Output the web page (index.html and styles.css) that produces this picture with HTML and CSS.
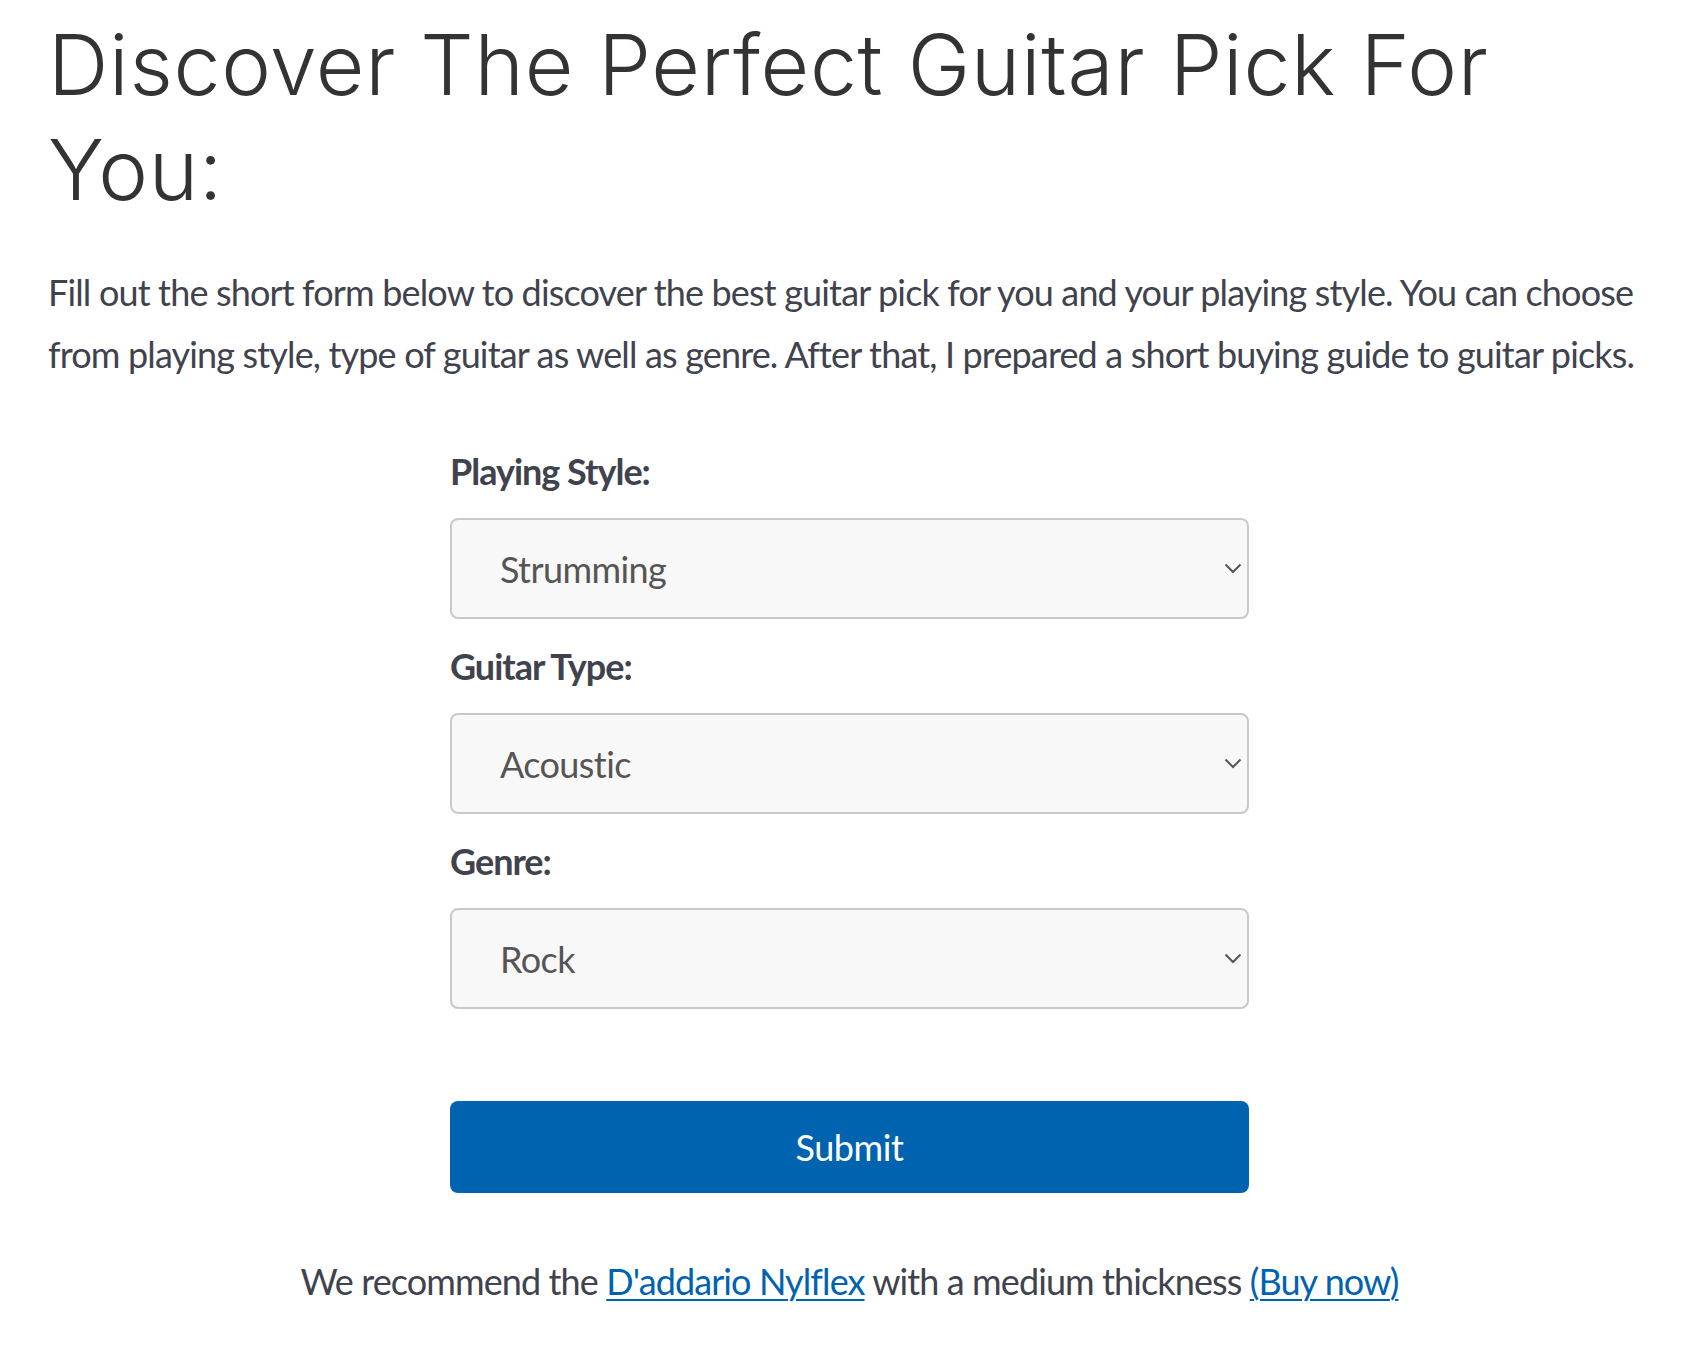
FILE: index.html
```html
<!DOCTYPE html>
<html lang="en">
<head>
<meta charset="utf-8">
<title>Discover The Perfect Guitar Pick For You</title>
<link rel="stylesheet" href="styles.css">
</head>
<body>
<main class="page">
  <h1 class="title">Discover The Perfect Guitar Pick For You:</h1>
  <p class="intro">Fill out the short form below to discover the best guitar pick for you and your playing style. You can choose from playing style, type of guitar as well as genre. After that, I prepared a short buying guide to guitar picks.</p>

  <form class="picker">
    <div class="field">
      <label class="field-label" for="style">Playing Style:</label>
      <div class="select-wrap">
        <select id="style" class="select">
          <option>Strumming</option>
          <option>Picking</option>
          <option>Both</option>
        </select>
        <svg class="chevron" viewBox="0 0 18 11" aria-hidden="true"><path d="M1.5 1.5 L9 9 L16.5 1.5" /></svg>
      </div>
    </div>
    <div class="field">
      <label class="field-label" for="type">Guitar Type:</label>
      <div class="select-wrap">
        <select id="type" class="select">
          <option>Acoustic</option>
          <option>Electric</option>
          <option>Bass</option>
        </select>
        <svg class="chevron" viewBox="0 0 18 11" aria-hidden="true"><path d="M1.5 1.5 L9 9 L16.5 1.5" /></svg>
      </div>
    </div>
    <div class="field">
      <label class="field-label" for="genre">Genre:</label>
      <div class="select-wrap">
        <select id="genre" class="select">
          <option>Rock</option>
          <option>Metal</option>
          <option>Jazz</option>
        </select>
        <svg class="chevron" viewBox="0 0 18 11" aria-hidden="true"><path d="M1.5 1.5 L9 9 L16.5 1.5" /></svg>
      </div>
    </div>
    <button type="button" class="submit">Submit</button>
  </form>

  <p class="result">We recommend the <a href="#">D'addario Nylflex</a> with a medium thickness <a href="#">(Buy now)</a></p>
</main>
</body>
</html>
```

FILE: styles.css
```css
html, body {
  margin: 0;
  padding: 0;
  background: #ffffff;
}

body {
  font-family: "Lato", "Liberation Sans", sans-serif;
  color: #40434d;
}

.page {
  padding: 12px 37px 40px 48px;
}

.title {
  margin: 0;
  font-family: "Inter", "Lato", sans-serif;
  font-weight: 300;
  font-size: 84px;
  line-height: 105px;
  color: #333333;
  letter-spacing: 0.7px;
}

.intro {
  margin: 39px 0 0 0;
  font-size: 36px;
  line-height: 62px;
  letter-spacing: -0.85px;
}

.picker {
  width: 799px;
  margin: 56px auto 0 auto;
  display: flex;
  flex-direction: column;
}

.field {
  display: flex;
  flex-direction: column;
  gap: 16px;
  margin-bottom: 17px;
}

.field-label {
  font-size: 36px;
  line-height: 61px;
  font-weight: 700;
  letter-spacing: -1px;
  color: #40434d;
}

.select-wrap {
  position: relative;
}

.select {
  appearance: none;
  -webkit-appearance: none;
  display: block;
  width: 100%;
  height: 101px;
  box-sizing: border-box;
  margin: 0;
  padding: 0 60px 0 48px;
  border: 2px solid #c9c9c9;
  border-radius: 8px;
  background: #f8f8f8;
  font-family: "Lato", "Liberation Sans", sans-serif;
  font-size: 36px;
  letter-spacing: -0.6px;
  color: #555555;
}

.chevron {
  position: absolute;
  right: 7px;
  top: 45px;
  width: 18px;
  height: 11px;
  fill: none;
  stroke: #555555;
  stroke-width: 2;
  pointer-events: none;
}

.submit {
  margin-top: 75px;
  height: 92px;
  width: 100%;
  border: none;
  border-radius: 8px;
  background: #0063b0;
  color: #ffffff;
  font-family: "Lato", "Liberation Sans", sans-serif;
  font-size: 36px;
  letter-spacing: -0.4px;
  cursor: pointer;
}

.result {
  margin: 57px 0 0 0;
  text-align: center;
  font-size: 36px;
  line-height: 62px;
  letter-spacing: -0.9px;
}

.result a {
  color: #0063b0;
  text-decoration: underline;
  text-decoration-thickness: 2px;
  text-underline-offset: 4px;
}
```
